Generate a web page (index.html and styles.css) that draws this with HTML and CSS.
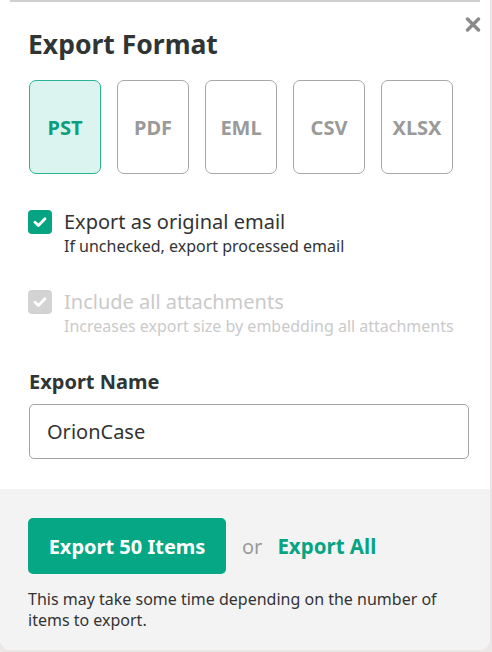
FILE: index.html
```html
<!DOCTYPE html>
<html>
<head>
<meta charset="utf-8">
<link rel="stylesheet" href="styles.css">
</head>
<body>
<div class="modal">
  <div class="topline"></div>
  <div class="body">
    <button class="close" aria-label="Close">
      <svg width="16" height="15" viewBox="0 0 16 15"><path d="M2.5 2L13.5 13M13.5 2L2.5 13" stroke="#8a8a8a" stroke-width="3.4" stroke-linecap="round"/></svg>
    </button>
    <h2 class="title">Export Format</h2>
    <div class="formats">
      <div class="fmt active">PST</div>
      <div class="fmt">PDF</div>
      <div class="fmt">EML</div>
      <div class="fmt">CSV</div>
      <div class="fmt">XLSX</div>
    </div>
    <div class="opt">
      <span class="box on"><svg width="16" height="16" viewBox="0 0 16 16"><path d="M3 8.3L6.4 11.5L13 4.8" fill="none" stroke="#fff" stroke-width="2.8" stroke-linecap="round" stroke-linejoin="round"/></svg></span>
      <div class="opt-text">
        <div class="opt-label">Export as original email</div>
        <div class="opt-sub">If unchecked, export processed email</div>
      </div>
    </div>
    <div class="opt disabled">
      <span class="box off"><svg width="16" height="16" viewBox="0 0 16 16"><path d="M3 8.3L6.4 11.5L13 4.8" fill="none" stroke="#fff" stroke-width="2.8" stroke-linecap="round" stroke-linejoin="round"/></svg></span>
      <div class="opt-text">
        <div class="opt-label">Include all attachments</div>
        <div class="opt-sub">Increases export size by embedding all attachments</div>
      </div>
    </div>
    <div class="name-label">Export Name</div>
    <div class="input">OrionCase</div>
  </div>
  <div class="footer">
    <div class="actions">
      <button class="primary">Export 50 Items</button>
      <span class="or">or</span>
      <span class="link">Export All</span>
    </div>
    <p class="note">This may take some time depending on the number of items to export.</p>
  </div>
</div>
</body>
</html>
```
FILE: styles.css
```css
* { box-sizing: border-box; }
html, body { margin: 0; padding: 0; }
body {
  background: #ebe7e7;
  font-family: "Noto Sans", "Open Sans", sans-serif;
  color: #333;
  width: 492px;
  height: 652px;
  overflow: hidden;
}
.modal {
  width: 491px;
  height: 650px;
  background: #fff;
  border-radius: 0 0 11px 11px;
  border-right: 1px solid #e6e6e6;
  overflow: hidden;
  display: flex;
  flex-direction: column;
}
.topline {
  height: 2px;
  margin: 0 10px;
  background: #cfcfcf;
}
.body {
  position: relative;
  padding: 0 22px 0 28px;
  flex: 0 0 487px;
}
.close {
  position: absolute;
  top: 15px;
  right: 9px;
  border: 0;
  background: none;
  padding: 0;
  width: 16px;
  height: 15px;
  display: flex;
}
.title {
  margin: 25px 0 0 0;
  font-size: 26.5px;
  line-height: 34px;
  font-weight: 700;
  color: #2f3535;
}
.formats {
  display: flex;
  gap: 16px;
  margin: 19px 0 0 1px;
}
.fmt {
  width: 72px;
  height: 94px;
  border: 1.5px solid #a8a8a8;
  border-radius: 7px;
  display: flex;
  align-items: center;
  justify-content: center;
  font-size: 20px;
  font-weight: 700;
  color: #9a9a9a;
}
.fmt.active {
  border-color: #2ab493;
  background: #dcf4ef;
  color: #0a9e7d;
}
.opt {
  display: flex;
  gap: 12px;
  align-items: flex-start;
}
.formats + .opt { margin-top: 36px; }
.opt + .opt { margin-top: 32px; }
.box {
  flex: 0 0 24px;
  width: 24px;
  height: 24px;
  border-radius: 4px;
  display: flex;
  align-items: center;
  justify-content: center;
}
.box.on { background: #06a482; }
.box.off { background: #d3d3d3; }
.opt-label {
  font-size: 20px;
  line-height: 24px;
  color: #333;
}
.opt-sub {
  font-size: 16px;
  line-height: 24px;
  color: #333;
}
.opt.disabled .opt-label,
.opt.disabled .opt-sub { color: #cacaca; }
.name-label {
  margin-top: 32px;
  font-size: 20px;
  line-height: 24px;
  font-weight: 700;
  color: #2f3535;
  margin-left: 1px;
}
.input {
  margin: 10px 0 0 1px;
  width: 440px;
  height: 55px;
  border: 1.5px solid #a3a3a3;
  border-radius: 5px;
  padding: 0 17px;
  display: flex;
  align-items: center;
  font-size: 20px;
  color: #333;
}
.footer {
  flex: 1;
  background: #f3f3f3;
  padding: 29px 28px 0 28px;
}
.actions {
  display: flex;
  align-items: center;
}
.primary {
  width: 198px;
  height: 56px;
  border: 0;
  border-radius: 5px;
  background: #05a784;
  color: #fff;
  font-family: inherit;
  font-size: 20px;
  font-weight: 700;
  padding: 0;
}
.or {
  margin-left: 16px;
  font-size: 20px;
  color: #9a9a9a;
}
.link {
  margin-left: 15px;
  font-size: 20.5px;
  font-weight: 700;
  color: #06a482;
}
.note {
  margin: 15px 0 0 0;
  font-size: 16px;
  line-height: 21px;
  color: #333;
  width: 430px;
}
```
